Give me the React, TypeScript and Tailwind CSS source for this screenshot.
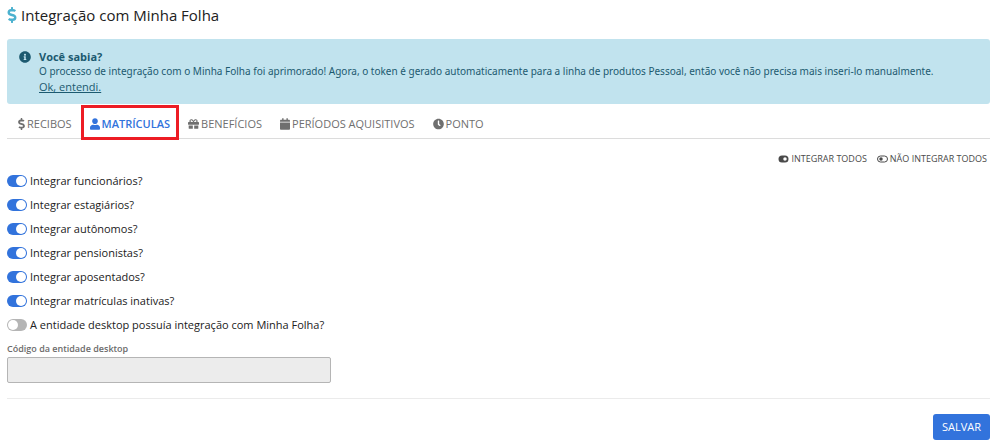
import { useState } from "react";
import {
  FaCalendar,
  FaClock,
  FaDollarSign,
  FaGift,
  FaInfoCircle,
  FaUser,
} from "react-icons/fa";

const tabs = [
  { id: "recibos", label: "RECIBOS", icon: FaDollarSign, iconClass: "h-3 w-[7px]" },
  { id: "matriculas", label: "MATRÍCULAS", icon: FaUser, iconClass: "h-3 w-[10px]" },
  { id: "beneficios", label: "BENEFÍCIOS", icon: FaGift, iconClass: "h-3 w-[11px]" },
  { id: "periodos", label: "PERÍODOS AQUISITIVOS", icon: FaCalendar, iconClass: "h-3 w-[10px]" },
  { id: "ponto", label: "PONTO", icon: FaClock, iconClass: "h-3 w-[11px]" },
];

const initialOptions = [
  { id: "funcionarios", label: "Integrar funcionários?", checked: true },
  { id: "estagiarios", label: "Integrar estagiários?", checked: true },
  { id: "autonomos", label: "Integrar autônomos?", checked: true },
  { id: "pensionistas", label: "Integrar pensionistas?", checked: true },
  { id: "aposentados", label: "Integrar aposentados?", checked: true },
  { id: "inativas", label: "Integrar matrículas inativas?", checked: true },
  { id: "desktop", label: "A entidade desktop possuía integração com Minha Folha?", checked: false },
];

function ToggleIcon({ on }: { on: boolean }) {
  return (
    <svg viewBox="0 0 22 16" className="h-2 w-[11px]" aria-hidden="true">
      {on ? (
        <path
          fill="currentColor"
          fillRule="evenodd"
          d="M8 1h6a7 7 0 0 1 0 14H8A7 7 0 0 1 8 1Zm6 3.5a3.5 3.5 0 1 0 0 7a3.5 3.5 0 0 0 0-7Z"
        />
      ) : (
        <>
          <rect x="1" y="2" width="20" height="12" rx="6" fill="none" stroke="currentColor" strokeWidth="2" />
          <circle cx="8" cy="8" r="3.5" fill="currentColor" />
        </>
      )}
    </svg>
  );
}

export default function App() {
  const [activeTab, setActiveTab] = useState("matriculas");
  const [showTip, setShowTip] = useState(true);
  const [options, setOptions] = useState(initialOptions);
  const [codigo, setCodigo] = useState("");

  const desktopEnabled = options.some((o) => o.id === "desktop" && o.checked);

  const toggle = (id: string) => {
    setOptions(options.map((o) => (o.id === id ? { ...o, checked: !o.checked } : o)));
  };

  const setAll = (checked: boolean) => {
    setOptions(options.map((o) => (o.id === "desktop" ? o : { ...o, checked })));
  };

  return (
    <main className="bg-white pr-2 pl-[7px] font-['Open_Sans',sans-serif] text-[11px] text-[#212121]">
      <h1 className="flex h-[30px] items-center gap-1 text-[15px]">
        <FaDollarSign className="h-4 w-[10px] text-[#4bb1cf]" />
        Integração com Minha Folha
      </h1>

      {showTip && (
        <div className="mt-[9px] flex gap-2 rounded-[3px] bg-[#c1e3ee] px-3 py-[10px] leading-[15px] text-[#1c5a70]">
          <FaInfoCircle className="mt-[2px] h-3 w-3 shrink-0" />
          <div>
            <p className="font-bold">Você sabia?</p>
            <p className="font-['Noto_Sans',sans-serif] text-[10px] leading-[15px]">
              O processo de integração com o Minha Folha foi aprimorado! Agora, o token é gerado
              automaticamente para a linha de produtos Pessoal, então você não precisa mais inseri-lo
              manualmente.
            </p>
            <a
              href="#"
              className="underline"
              onClick={(e) => {
                e.preventDefault();
                setShowTip(false);
              }}
            >
              Ok, entendi.
            </a>
          </div>
        </div>
      )}

      <nav className="flex border-b border-[#dcdcdc] px-[2px]">
        {tabs.map(({ id, label, icon: Icon, iconClass }) => {
          const active = id === activeTab;
          return (
            <button
              key={id}
              type="button"
              onClick={() => setActiveTab(id)}
              className={
                active
                  ? "relative -mb-px flex h-[35px] items-center gap-[2px] border-b border-[#3273dc] px-[9px] pt-[6px] font-semibold text-[#3273dc]"
                  : "flex h-[34px] items-center gap-[2px] px-[9px] pt-[6px] text-[#6f6f6f]"
              }
            >
              <Icon className={iconClass} />
              {label}
              {active && (
                <span className="pointer-events-none absolute inset-x-0 top-px -bottom-[2px] border-3 border-[#ed1c24]" />
              )}
            </button>
          );
        })}
      </nav>

      <div className="mt-3 flex justify-end gap-[10px] pr-[3px] text-[9px] leading-4 text-[#4a4a4a]">
        <button type="button" onClick={() => setAll(true)} className="flex items-center gap-[2px]">
          <ToggleIcon on />
          INTEGRAR TODOS
        </button>
        <button type="button" onClick={() => setAll(false)} className="flex items-center gap-[2px]">
          <ToggleIcon on={false} />
          NÃO INTEGRAR TODOS
        </button>
      </div>

      <div className="mt-[2px]">
        {options.map((o) => (
          <label key={o.id} className="flex h-6 items-center gap-[3px]">
            <input
              type="checkbox"
              checked={o.checked}
              onChange={() => toggle(o.id)}
              className="h-3 w-5 appearance-none rounded-full bg-[#b5b5b5] p-px before:block before:size-[10px] before:rounded-full before:bg-white checked:bg-[#3273dc] checked:before:ml-2"
            />
            {o.label}
          </label>
        ))}
      </div>

      <div className="mt-1">
        <label htmlFor="codigo" className="block text-[9px] leading-4 font-semibold text-[#6b6b6b]">
          Código da entidade desktop
        </label>
        <input
          id="codigo"
          type="text"
          value={codigo}
          disabled={!desktopEnabled}
          onChange={(e) => setCodigo(e.target.value)}
          className="block h-[26px] w-[324px] max-w-full rounded-[2px] border border-[#b5b5b5] px-2 disabled:bg-[#ececec]"
        />
      </div>

      <footer className="mt-[15px] flex justify-end border-t border-[#ebebeb] pt-[15px]">
        <button type="button" className="h-[26px] rounded-[3px] bg-[#3273dc] px-[9px] text-white">
          SALVAR
        </button>
      </footer>
    </main>
  );
}
